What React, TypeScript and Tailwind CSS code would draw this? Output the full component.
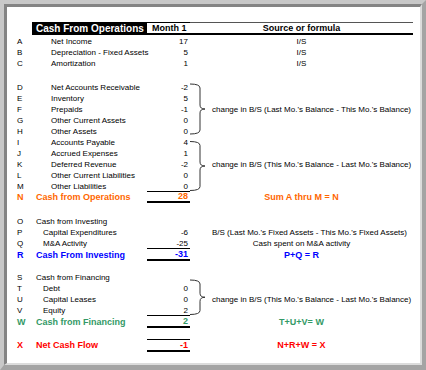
import React from "react";

type Tone = "black" | "orange" | "blue" | "green" | "red";

const toneCls: Record<Tone, string> = {
  black: "text-black text-[8px]",
  orange: "text-[#ff6600] text-[9px] font-bold",
  blue: "text-[#0000ff] text-[9px] font-bold",
  green: "text-[#339966] text-[9px] font-bold",
  red: "text-[#ff0000] text-[9px] font-bold",
};

function Brace({ h, top, bottom }: { h: number; top: number; bottom: number }) {
  const xv = 10;
  const xp = 15;
  const r = 4;
  const ym = (top + bottom) / 2;
  const d = `M0,${top} Q${xv},${top} ${xv},${top + r} L${xv},${ym - r} Q${xv},${ym} ${xp},${ym} Q${xv},${ym} ${xv},${ym + r} L${xv},${bottom - r} Q${xv},${bottom} 0,${bottom}`;
  return (
    <svg width={20} height={h} viewBox={`0 0 20 ${h}`} className="block">
      <path d={d} fill="none" stroke="#333" strokeWidth={1} />
    </svg>
  );
}

type RowProps = {
  letter: string;
  label: string;
  indent?: 0 | 1 | 2;
  value?: string;
  tone?: Tone;
  src?: string;
  srcLeft?: boolean;
  skip4?: boolean;
  brace?: React.ReactNode;
  braceSpan4?: boolean;
  vb?: string;
};

function Row({ letter, label, indent = 2, value = "", tone = "black", src = "", srcLeft = false, skip4 = false, brace, braceSpan4 = false, vb = "" }: RowProps) {
  const t = toneCls[tone];
  const ind = indent === 0 ? "pl-[4px]" : indent === 1 ? "pl-[11px]" : "pl-[19px]";
  return (
    <>
      <div className={`${t} leading-[11px] flex items-center`}>{letter}</div>
      <div className={`${t} ${ind} leading-[11px] whitespace-nowrap flex items-center`}>{label}</div>
      <div className={`${t} ${vb} border-black flex items-center justify-end pr-[2px] leading-[11px]`}>{value}</div>
      {srcLeft ? (
        <>
          {brace ? <div className={braceSpan4 ? "row-span-4" : "row-span-5"}>{brace}</div> : skip4 ? null : <div />}
          <div className="text-black text-[8px] pl-[2px] leading-[11px] whitespace-nowrap flex items-center">{src}</div>
        </>
      ) : (
        <div className={`${t} col-span-2 text-center leading-[11px] whitespace-nowrap flex items-center justify-center`}>{src}</div>
      )}
    </>
  );
}

function Blank() {
  return <div className="col-span-5" />;
}

export default function App() {
  return (
    <div className="w-[426px] h-[370px] border-t-4 border-l-4 border-r-4 border-b-[5px] border-t-[#c8c8c8] border-l-[#c8c8c8] border-r-[#a4a4a4] border-b-[#a4a4a4] bg-[#c0c0c0] font-['Liberation_Sans',Arial,sans-serif]">
      <div className="h-full bg-white border-t-[3px] border-l-[3px] border-t-[#848484] border-l-[#848484] border-r-2 border-b-2 border-r-[#dcdcdc] border-b-[#dcdcdc] pt-[15px] pl-[10px]">
        <div className="grid grid-cols-[15px_115px_43px_20px_203px] grid-rows-[13px_1px_11px_11px_11px_13px_11px_11px_11px_11px_11px_11px_11px_11px_11px_11px_11px_13px_11px_11px_11px_12px_11px_11px_11px_11px_11px_12px_11px_13px]">
          {/* header */}
          <div />
          <div className="bg-black text-white text-[10px] font-bold pl-[4px] leading-[13px] whitespace-nowrap">Cash From Operations</div>
          <div className="border-t border-t-black border-b-2 border-b-black text-black text-[9px] font-bold pl-[5px] leading-[10px] whitespace-nowrap">Month 1</div>
          <div className="col-span-2 border-t border-t-[#555] border-b-2 border-b-black text-black text-[9px] font-bold text-center leading-[10px] whitespace-nowrap">Source or formula</div>
          <Blank />

          <Row letter="A" label="Net Income" value="17" src="I/S" />
          <Row letter="B" label="Depreciation - Fixed Assets" value="5" src="I/S" />
          <Row letter="C" label="Amortization" value="1" src="I/S" />
          <Blank />

          <Row letter="D" label="Net Accounts Receivable" value="-2" srcLeft brace={<Brace h={55} top={2} bottom={52} />} />
          <Row letter="E" label="Inventory" value="5" srcLeft skip4 />
          <Row letter="F" label="Prepaids" value="-1" srcLeft skip4 src="change in B/S (Last Mo.'s Balance - This Mo.'s Balance)" />
          <Row letter="G" label="Other Current Assets" value="0" srcLeft skip4 />
          <Row letter="H" label="Other Assets" value="0" srcLeft skip4 />
          <Row letter="I" label="Accounts Payable" value="4" srcLeft brace={<Brace h={55} top={4.5} bottom={53.5} />} />
          <Row letter="J" label="Accrued Expenses" value="1" srcLeft skip4 />
          <Row letter="K" label="Deferred Revenue" value="-2" srcLeft skip4 src="change in B/S (This Mo.'s Balance - Last Mo.'s Balance)" />
          <Row letter="L" label="Other Current Liabilities" value="0" srcLeft skip4 />
          <Row letter="M" label="Other Liabilities" value="0" srcLeft skip4 vb="border-b" />
          <Row letter="N" label="Cash from Operations" indent={0} tone="orange" value="28" vb="border-b-2" src="Sum A thru M = N" />
          <Blank />

          <Row letter="O" label="Cash from Investing" indent={0} />
          <Row letter="P" label="Capital Expenditures" indent={1} value="-6" srcLeft src="B/S (Last Mo.'s Fixed Assets - This Mo.'s Fixed Assets)" />
          <Row letter="Q" label="M&A Activity" indent={1} value="-25" vb="border-b" src="Cash spent on M&A activity" />
          <Row letter="R" label="Cash From Investing" indent={0} tone="blue" value="-31" vb="border-b-2" src="P+Q = R" />
          <Blank />

          <Row letter="S" label="Cash from Financing" indent={0} srcLeft braceSpan4 brace={<Brace h={44} top={8} bottom={42.5} />} />
          <Row letter="T" label="Debt" indent={1} value="0" srcLeft skip4 />
          <Row letter="U" label="Capital Leases" indent={1} value="0" srcLeft skip4 src="change in B/S (This Mo.'s Balance - Last Mo.'s Balance)" />
          <Row letter="V" label="Equity" indent={1} value="2" srcLeft skip4 vb="border-b" />
          <Row letter="W" label="Cash from Financing" indent={0} tone="green" value="2" vb="border-b-2" src="T+U+V= W" />
          <Blank />

          <Row letter="X" label="Net Cash Flow" indent={0} tone="red" value="-1" vb="border-t border-b-2" src="N+R+W = X" />
        </div>
      </div>
    </div>
  );
}
